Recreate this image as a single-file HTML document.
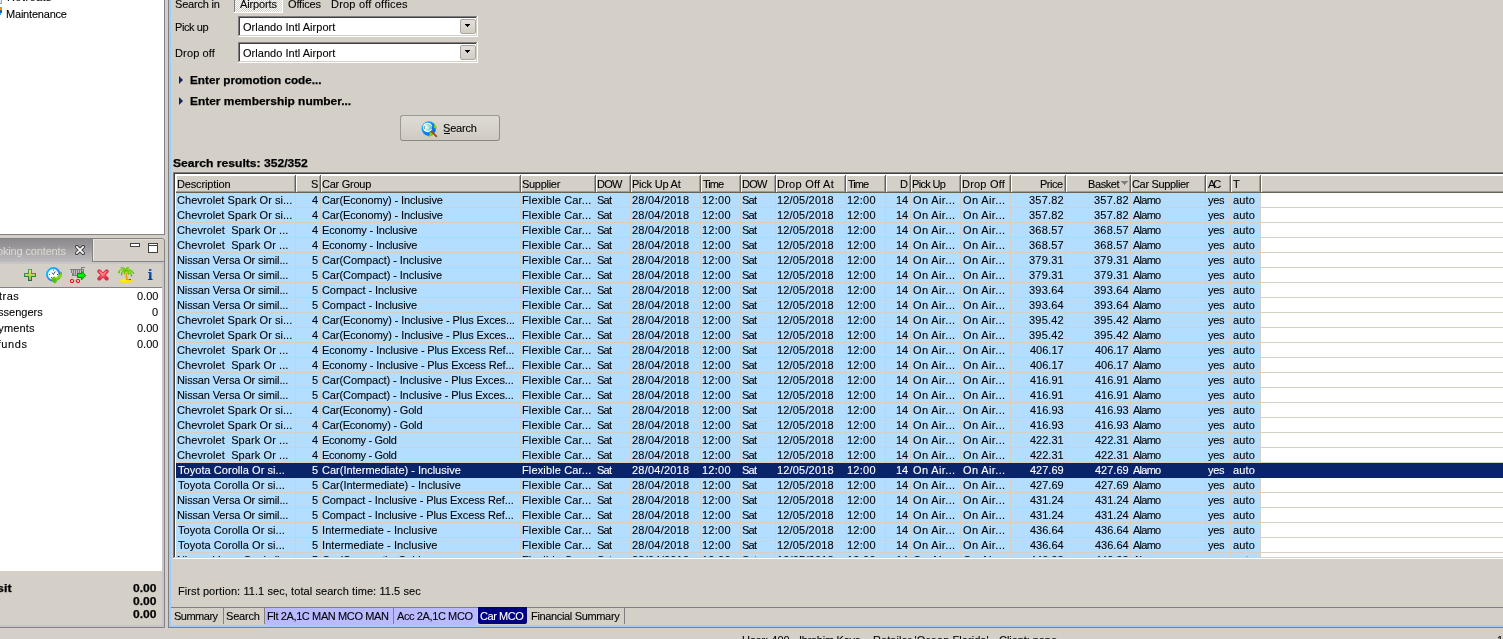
<!DOCTYPE html>
<html lang="en"><head><meta charset="utf-8"><title>Car search</title>
<style>
html,body{margin:0;padding:0;background:#d4d0c8;overflow:hidden;}
#root{position:relative;width:1503px;height:639px;overflow:hidden;background:#d4d0c8;font-family:"Liberation Sans",sans-serif;font-size:11px;color:#000;}
#root div,#root span,#root svg{position:absolute;}
.t{transform-origin:0 0;-webkit-text-stroke:0.1px currentColor;white-space:pre;line-height:13px;height:13px;font-size:11px;}
.clip{height:3px;overflow:hidden;}
#tx{left:0;top:0;width:1503px;height:639px;will-change:transform;}
.ns{-webkit-text-stroke:0 !important;}
</style></head>
<body>
<div id="root">
<div style="left:0px;top:0px;width:164px;height:234px;background:#fff;"></div>
<div style="left:164px;top:0px;width:1px;height:235px;background:#848284;"></div>
<div style="left:0px;top:234px;width:165px;height:1px;background:#848284;"></div>
<div style="left:0px;top:0px;width:1px;height:3px;background:#e4e8f6;"></div>
<div style="left:1px;top:0px;width:1px;height:4px;background:#9aa4b8;"></div>
<div style="left:0px;top:3px;width:2px;height:1px;background:#9aa4b8;"></div>
<div style="left:0px;top:7px;width:2px;height:1px;background:#38b4f0;"></div>
<div style="left:0px;top:8px;width:1px;height:2px;background:#ffa000;"></div>
<div style="left:1px;top:8px;width:1px;height:2px;background:#40a8e8;"></div>
<div style="left:0px;top:10px;width:2px;height:3px;background:#1464d0;"></div>
<div style="left:0px;top:13px;width:1px;height:2px;background:#28a8f0;"></div>
<div style="left:-5px;top:238px;width:168px;height:388px;border:1px solid #848284;border-top-right-radius:3px;box-sizing:content-box;background:#d4d0c8"></div>
<div style="left:0;top:239px;width:92px;height:23px;background:linear-gradient(#8c8a8c,#979597 30%,#b0adb0 70%,#bfbbbe)"></div>
<div style="left:92px;top:239px;width:1px;height:23px;background:#848284;"></div>
<div style="left:92px;top:261px;width:72px;height:1px;background:#848284;"></div>
<div style="left:93px;top:239px;width:1px;height:22px;background:#ece9e4;"></div>
<div style="left:94px;top:239px;width:69px;height:1px;background:#dfdbd5;"></div>
<div style="left:0px;top:262px;width:164px;height:2px;background:#c8c5c9;"></div>
<div style="left:162px;top:262px;width:2px;height:365px;background:#c8c5c9;"></div>
<div style="left:0px;top:625px;width:164px;height:2px;background:#c8c5c9;"></div>
<div style="left:0px;top:287px;width:162px;height:1px;background:#848284;"></div>
<div style="left:0px;top:288px;width:162px;height:283px;background:#fff;"></div>
<svg style="left:24px;top:269px" width="12" height="12" viewBox="0 0 12 12" ><defs><linearGradient id="pg" x1="0" y1="0" x2="0" y2="1"><stop offset="0" stop-color="#f0ee4a"/><stop offset="1" stop-color="#8fb84f"/></linearGradient><linearGradient id="pb" x1="0" y1="0" x2="0" y2="1"><stop offset="0" stop-color="#47a468"/><stop offset="1" stop-color="#1d6f3c"/></linearGradient></defs>
<path d="M4 0h4v4h4v4h-4v4h-4v-4h-4v-4h4z" fill="url(#pb)"/><path d="M5 1h2v4h4v2h-4v4h-2v-4h-4v-2h4z" fill="url(#pg)"/></svg>
<svg style="left:46px;top:267px" width="16" height="17" viewBox="0 0 16 17" ><defs><linearGradient id="cr" x1="0" y1="0" x2="1" y2="1"><stop offset="0" stop-color="#19c8ff"/><stop offset="1" stop-color="#0a5cff"/></linearGradient></defs>
<circle cx="7.3" cy="7.4" r="6.3" fill="#fff" stroke="url(#cr)" stroke-width="2"/>
<g fill="#555"><rect x="7" y="2.6" width="1" height="1"/><rect x="3" y="7" width="1" height="1"/><rect x="11" y="7" width="1" height="1"/><rect x="5" y="10" width="1" height="1"/><rect x="9.5" y="4.5" width="1" height="1" fill="#999"/></g>
<path d="M6 5.5L7.5 7.5L9 4.5" stroke="#555" stroke-width="1" fill="none"/>
<path d="M16 4.8C16.6 9.2 13.8 12.8 10.4 13.6L10.8 15.2L8.2 16.4L5 12L8.4 9L8.9 10.8C11.4 10.4 13.8 8.4 14.8 5Z" fill="#5cc000"/>
<path d="M15.6 6C15.8 9 13.6 12 10.2 12.8L9.4 10.4L6 12.4L8.8 11.6Z" fill="#92e400" opacity=".75"/></svg>
<svg style="left:70px;top:267px" width="17" height="16" viewBox="0 0 17 16" ><g fill="#7f7f7f"><rect x="11" y="0" width="4" height="1"/><rect x="11" y="0" width="1" height="3"/><rect x="0" y="2" width="14" height="1"/>
<rect x="1" y="3" width="1" height="3"/><rect x="3" y="3" width="1" height="5"/><rect x="5" y="3" width="1" height="5"/><rect x="7" y="3" width="1" height="5"/><rect x="9" y="3" width="1" height="4"/><rect x="11" y="3" width="1" height="3"/><rect x="13" y="3" width="1" height="4"/>
<rect x="2" y="6" width="1" height="2"/><rect x="2" y="8" width="6" height="1"/></g>
<g fill="#bdbdbd"><rect x="2" y="3" width="1" height="3"/><rect x="4" y="3" width="1" height="5"/><rect x="6" y="3" width="1" height="5"/><rect x="8" y="3" width="1" height="4"/><rect x="10" y="3" width="1" height="3"/><rect x="12" y="3" width="1" height="3"/></g>
<path d="M7.5 6.5h4v-2.4l4.2 4.4l-4.2 4.4v-2.4h-4z" fill="#00e800" stroke="#0a8a0a" stroke-width="1" stroke-linejoin="miter"/>
<path d="M8.5 7.5h3v2h-3z" fill="#00ff00"/>
<circle cx="2" cy="14" r="1.5" fill="#fff" stroke="#f00000" stroke-width="1.1"/><circle cx="8" cy="14" r="1.5" fill="#fff" stroke="#f00000" stroke-width="1.1"/>
<rect x="4.2" y="13.5" width="1.6" height="1" fill="#9fb4c8"/></svg>
<svg style="left:97px;top:269px" width="12" height="12" viewBox="0 0 12 12" ><defs><radialGradient id="xg" cx=".42" cy=".4" r=".75"><stop offset="0" stop-color="#ff7f86"/><stop offset=".55" stop-color="#f4485c"/><stop offset="1" stop-color="#de2a44"/></radialGradient></defs>
<path d="M2.3 2.3L9.7 9.7M9.7 2.3L2.3 9.7" stroke="#d63346" stroke-width="3.9" stroke-linecap="round"/>
<path d="M2.4 2.4L9.6 9.6M9.6 2.4L2.4 9.6" stroke="url(#xg)" stroke-width="2.5" stroke-linecap="round"/>
<path d="M2.5 2.3L5.4 5.2M9.3 2.5L7 4.8" stroke="#ff9a96" stroke-width="1.1" stroke-linecap="round" opacity=".85"/></svg>
<svg style="left:118px;top:267px" width="17" height="16" viewBox="0 0 17 16" ><ellipse cx="7.9" cy="14" rx="7" ry="1.9" fill="#ffe400"/><ellipse cx="7.4" cy="13.2" rx="4.6" ry="1" fill="#fff400"/>
<path d="M7.3 3.5C7.2 6.5 8.2 9 8.8 13" stroke="#ffc800" stroke-width="2" fill="none"/>
<path d="M7.8 6.4l1.2 .8M8 8.8l1.2 .5M8.4 10.8l1 .4M8.4 12.6l1.2 .2" stroke="#d25a14" stroke-width="1"/>
<rect x="10.6" y="12.2" width="2.4" height=".9" fill="#5a3c00"/>
<g fill="none" stroke="#5ec400" stroke-width="1.25" stroke-linecap="round">
<path d="M7.4 3.2C5 1.4 2 2.4 0.6 5.2"/><path d="M7.4 3.4C5.4 3 3.8 4.8 3.4 7.4"/><path d="M7.2 3.6C6.4 4.6 6.2 5.6 6.4 6.6"/>
<path d="M7.6 3.2C10 1.6 13.4 3 15.4 6"/><path d="M7.6 3.4C10.4 3.4 12.8 5.2 13.4 8.4"/><path d="M8 3.8C9.8 4.4 10.6 6 10.4 7.2"/>
<path d="M7.4 3C6.4 1.2 4.4 0.5 3.2 0.8"/><path d="M7.6 3C8.2 1.4 9.4 0.6 10.4 0.8"/></g>
<g fill="none" stroke="#92e200" stroke-width=".9" stroke-linecap="round"><path d="M6.4 2.4C5 1.8 3.4 2.6 2.4 3.8"/><path d="M8.8 2.6C10.6 2.2 12.4 3.4 13.6 5"/><path d="M9.2 4.4C10.4 4.8 11.4 5.8 11.8 7"/></g>
<g fill="#4eb000"><rect x="0.3" y="5" width="1.2" height="1.2"/><rect x="3" y="7" width="1.2" height="1.4"/><rect x="13" y="8" width="1.2" height="1.4"/><rect x="15" y="5.6" width="1" height="1.2"/></g></svg>
<svg style="left:148px;top:269px" width="5" height="11" viewBox="0 0 5 11" ><defs><linearGradient id="ig" x1="0" y1="0" x2="0" y2="1"><stop offset="0" stop-color="#1564b8"/><stop offset="1" stop-color="#043a8c"/></linearGradient></defs>
<path d="M1 0h2.4v2h-2.4zM0 3h3.5v7h1.1v1h-4.6v-1h1.1v-6h-1.1z" fill="url(#ig)"/></svg>
<svg style="left:75px;top:245px" width="10" height="10" viewBox="0 0 10 10" ><path d="M1.8 1.8L8.2 8.2M8.2 1.8L1.8 8.2" stroke="#3a3a3a" stroke-width="3.6" stroke-linecap="square"/><path d="M1.9 1.9L8.1 8.1M8.1 1.9L1.9 8.1" stroke="#fff" stroke-width="1.8" stroke-linecap="square"/></svg>
<div style="left:130px;top:243px;width:8px;height:2px;border:1px solid #404040;background:#fff"></div>
<div style="left:148px;top:243px;width:8px;height:8px;border:1px solid #404040;background:#fff"></div>
<div style="left:149px;top:245px;width:8px;height:1px;background:#404040;"></div>
<div style="left:168px;top:0px;width:1px;height:628px;background:#808080;"></div>
<div style="left:169px;top:0px;width:2px;height:627px;background:#a3ccfe;"></div>
<div style="left:169px;top:625px;width:1334px;height:2px;background:#a3ccfe;"></div>
<div style="left:168px;top:627px;width:1335px;height:1px;background:#808080;"></div>
<div style="left:234px;top:0px;width:1px;height:12px;background:#808080;"></div>
<div style="left:235px;top:0;width:47px;height:12px;background:repeating-conic-gradient(#fff 0 25%,#d4d0c8 0 50%) 0 0/2px 2px"></div>
<div style="left:282px;top:0px;width:1px;height:13px;background:#fff;"></div>
<div style="left:234px;top:12px;width:49px;height:1px;background:#fff;"></div>
<div style="left:238px;top:16px;width:240px;height:21px;background:#fff;"></div>
<div style="left:238px;top:16px;width:239px;height:1px;background:#808080;"></div>
<div style="left:238px;top:16px;width:1px;height:20px;background:#808080;"></div>
<div style="left:239px;top:17px;width:237px;height:1px;background:#404040;"></div>
<div style="left:239px;top:17px;width:1px;height:18px;background:#404040;"></div>
<div style="left:239px;top:35px;width:238px;height:1px;background:#d4d0c8;"></div>
<div style="left:476px;top:17px;width:1px;height:19px;background:#d4d0c8;"></div>
<div style="left:460px;top:19px;width:14px;height:13px;border:1px solid #aaa69f;border-radius:2px;background:linear-gradient(#e2dfda,#d2cec6)"></div>
<div style="left:465px;top:24px;width:5px;height:1px;background:#000;"></div>
<div style="left:466px;top:25px;width:3px;height:1px;background:#000;"></div>
<div style="left:467px;top:26px;width:1px;height:1px;background:#000;"></div>
<div style="left:238px;top:42px;width:240px;height:21px;background:#fff;"></div>
<div style="left:238px;top:42px;width:239px;height:1px;background:#808080;"></div>
<div style="left:238px;top:42px;width:1px;height:20px;background:#808080;"></div>
<div style="left:239px;top:43px;width:237px;height:1px;background:#404040;"></div>
<div style="left:239px;top:43px;width:1px;height:18px;background:#404040;"></div>
<div style="left:239px;top:61px;width:238px;height:1px;background:#d4d0c8;"></div>
<div style="left:476px;top:43px;width:1px;height:19px;background:#d4d0c8;"></div>
<div style="left:460px;top:45px;width:14px;height:13px;border:1px solid #aaa69f;border-radius:2px;background:linear-gradient(#e2dfda,#d2cec6)"></div>
<div style="left:465px;top:50px;width:5px;height:1px;background:#000;"></div>
<div style="left:466px;top:51px;width:3px;height:1px;background:#000;"></div>
<div style="left:467px;top:52px;width:1px;height:1px;background:#000;"></div>
<svg style="left:179px;top:76px" width="4" height="8" viewBox="0 0 4 8"><path d="M0 0L4 4L0 8Z" fill="#0a246a"/></svg>
<svg style="left:179px;top:97px" width="4" height="8" viewBox="0 0 4 8"><path d="M0 0L4 4L0 8Z" fill="#0a246a"/></svg>
<div style="left:400px;top:115px;width:98px;height:24px;border:1px solid #9d9993;border-bottom-color:#8b8781;border-right-color:#928e88;border-radius:3px;background:linear-gradient(#dedbd5,#d6d2ca 60%,#cecac2)"></div>
<svg style="left:421px;top:121px" width="17" height="17" viewBox="0 0 17 17" ><defs><linearGradient id="gg" x1="0" y1="0" x2="1" y2="1"><stop offset="0" stop-color="#18d0ff"/><stop offset=".5" stop-color="#0a84ff"/><stop offset="1" stop-color="#0a5cf0"/></linearGradient>
<radialGradient id="lg" cx=".35" cy=".5" r=".6"><stop offset="0" stop-color="#ffffff"/><stop offset=".5" stop-color="#b9e6c8"/><stop offset="1" stop-color="#46b4e8"/></radialGradient></defs>
<circle cx="7.8" cy="7.6" r="7.3" fill="url(#gg)"/>
<path d="M13 2.4c1.6 1 2.6 2.6 2.9 4.6l-1.2 .8l-1.8-1.4l.4-1.8z" fill="#8cd600"/><path d="M8.4 11.6l3-1l1.6 1.6l-1.6 2.2l-2.6 .6l-.6 1.4l-1-.4l1.4-2.4z" fill="#7ed000"/>
<path d="M10.4 10.4L15.4 15.4" stroke="#9a4a12" stroke-width="1.7" stroke-linecap="round"/>
<circle cx="6.6" cy="6.4" r="4.1" fill="url(#lg)" stroke="#fff" stroke-width="1.3"/>
<path d="M3.4 5.4a3.4 3.4 0 0 0 0 2.4" stroke="#58785e" stroke-width="1" fill="none"/><path d="M10.9 5.2a4.6 4.6 0 0 1 0 2.8" stroke="#1a3a70" stroke-width=".9" fill="none"/></svg>
<div style="left:444px;top:133px;width:6px;height:1px;background:#000;"></div>
<div style="left:173px;top:172px;width:1330px;height:387px;background:#fff;"></div>
<div style="left:173px;top:172px;width:1330px;height:1px;background:#808080;"></div>
<div style="left:173px;top:172px;width:1px;height:386px;background:#808080;"></div>
<div style="left:174px;top:173px;width:1329px;height:1px;background:#404040;"></div>
<div style="left:174px;top:173px;width:1px;height:384px;background:#404040;"></div>
<div style="left:174px;top:557px;width:1329px;height:1px;background:#d4d0c8;"></div>
<div style="left:177px;top:176px;width:1326px;height:15px;background:#d4d0c8;"></div>
<div style="left:176px;top:191px;width:1327px;height:1px;background:#a09c94;"></div>
<div style="left:176px;top:192px;width:1327px;height:1px;background:#666258;"></div>
<div style="left:294px;top:176px;width:1px;height:16px;background:#a09c94;"></div>
<div style="left:295px;top:175px;width:1px;height:18px;background:#666258;"></div>
<div style="left:296px;top:175px;width:1px;height:17px;background:#fff;"></div>
<div style="left:319px;top:176px;width:1px;height:16px;background:#a09c94;"></div>
<div style="left:320px;top:175px;width:1px;height:18px;background:#666258;"></div>
<div style="left:321px;top:175px;width:1px;height:17px;background:#fff;"></div>
<div style="left:519px;top:176px;width:1px;height:16px;background:#a09c94;"></div>
<div style="left:520px;top:175px;width:1px;height:18px;background:#666258;"></div>
<div style="left:521px;top:175px;width:1px;height:17px;background:#fff;"></div>
<div style="left:594px;top:176px;width:1px;height:16px;background:#a09c94;"></div>
<div style="left:595px;top:175px;width:1px;height:18px;background:#666258;"></div>
<div style="left:596px;top:175px;width:1px;height:17px;background:#fff;"></div>
<div style="left:629px;top:176px;width:1px;height:16px;background:#a09c94;"></div>
<div style="left:630px;top:175px;width:1px;height:18px;background:#666258;"></div>
<div style="left:631px;top:175px;width:1px;height:17px;background:#fff;"></div>
<div style="left:699px;top:176px;width:1px;height:16px;background:#a09c94;"></div>
<div style="left:700px;top:175px;width:1px;height:18px;background:#666258;"></div>
<div style="left:701px;top:175px;width:1px;height:17px;background:#fff;"></div>
<div style="left:739px;top:176px;width:1px;height:16px;background:#a09c94;"></div>
<div style="left:740px;top:175px;width:1px;height:18px;background:#666258;"></div>
<div style="left:741px;top:175px;width:1px;height:17px;background:#fff;"></div>
<div style="left:774px;top:176px;width:1px;height:16px;background:#a09c94;"></div>
<div style="left:775px;top:175px;width:1px;height:18px;background:#666258;"></div>
<div style="left:776px;top:175px;width:1px;height:17px;background:#fff;"></div>
<div style="left:844px;top:176px;width:1px;height:16px;background:#a09c94;"></div>
<div style="left:845px;top:175px;width:1px;height:18px;background:#666258;"></div>
<div style="left:846px;top:175px;width:1px;height:17px;background:#fff;"></div>
<div style="left:884px;top:176px;width:1px;height:16px;background:#a09c94;"></div>
<div style="left:885px;top:175px;width:1px;height:18px;background:#666258;"></div>
<div style="left:886px;top:175px;width:1px;height:17px;background:#fff;"></div>
<div style="left:909px;top:176px;width:1px;height:16px;background:#a09c94;"></div>
<div style="left:910px;top:175px;width:1px;height:18px;background:#666258;"></div>
<div style="left:911px;top:175px;width:1px;height:17px;background:#fff;"></div>
<div style="left:959px;top:176px;width:1px;height:16px;background:#a09c94;"></div>
<div style="left:960px;top:175px;width:1px;height:18px;background:#666258;"></div>
<div style="left:961px;top:175px;width:1px;height:17px;background:#fff;"></div>
<div style="left:1009px;top:176px;width:1px;height:16px;background:#a09c94;"></div>
<div style="left:1010px;top:175px;width:1px;height:18px;background:#666258;"></div>
<div style="left:1011px;top:175px;width:1px;height:17px;background:#fff;"></div>
<div style="left:1064px;top:176px;width:1px;height:16px;background:#a09c94;"></div>
<div style="left:1065px;top:175px;width:1px;height:18px;background:#666258;"></div>
<div style="left:1066px;top:175px;width:1px;height:17px;background:#fff;"></div>
<div style="left:1129px;top:176px;width:1px;height:16px;background:#a09c94;"></div>
<div style="left:1130px;top:175px;width:1px;height:18px;background:#666258;"></div>
<div style="left:1131px;top:175px;width:1px;height:17px;background:#fff;"></div>
<div style="left:1204px;top:176px;width:1px;height:16px;background:#a09c94;"></div>
<div style="left:1205px;top:175px;width:1px;height:18px;background:#666258;"></div>
<div style="left:1206px;top:175px;width:1px;height:17px;background:#fff;"></div>
<div style="left:1229px;top:176px;width:1px;height:16px;background:#a09c94;"></div>
<div style="left:1230px;top:175px;width:1px;height:18px;background:#666258;"></div>
<div style="left:1231px;top:175px;width:1px;height:17px;background:#fff;"></div>
<div style="left:1259px;top:176px;width:1px;height:16px;background:#a09c94;"></div>
<div style="left:1260px;top:175px;width:1px;height:18px;background:#666258;"></div>
<div style="left:1261px;top:175px;width:1px;height:17px;background:#fff;"></div>
<div style="left:176px;top:193px;width:1084px;height:14px;background:#b4deff;"></div>
<div style="left:176px;top:207px;width:1327px;height:1px;background:#d4d0c8;"></div>
<div style="left:176px;top:208px;width:1084px;height:14px;background:#b4deff;"></div>
<div style="left:176px;top:222px;width:1327px;height:1px;background:#d4d0c8;"></div>
<div style="left:176px;top:223px;width:1084px;height:14px;background:#b4deff;"></div>
<div style="left:176px;top:237px;width:1327px;height:1px;background:#d4d0c8;"></div>
<div style="left:176px;top:238px;width:1084px;height:14px;background:#b4deff;"></div>
<div style="left:176px;top:252px;width:1327px;height:1px;background:#d4d0c8;"></div>
<div style="left:176px;top:253px;width:1084px;height:14px;background:#b4deff;"></div>
<div style="left:176px;top:267px;width:1327px;height:1px;background:#d4d0c8;"></div>
<div style="left:176px;top:268px;width:1084px;height:14px;background:#b4deff;"></div>
<div style="left:176px;top:282px;width:1327px;height:1px;background:#d4d0c8;"></div>
<div style="left:176px;top:283px;width:1084px;height:14px;background:#b4deff;"></div>
<div style="left:176px;top:297px;width:1327px;height:1px;background:#d4d0c8;"></div>
<div style="left:176px;top:298px;width:1084px;height:14px;background:#b4deff;"></div>
<div style="left:176px;top:312px;width:1327px;height:1px;background:#d4d0c8;"></div>
<div style="left:176px;top:313px;width:1084px;height:14px;background:#b4deff;"></div>
<div style="left:176px;top:327px;width:1327px;height:1px;background:#d4d0c8;"></div>
<div style="left:176px;top:328px;width:1084px;height:14px;background:#b4deff;"></div>
<div style="left:176px;top:342px;width:1327px;height:1px;background:#d4d0c8;"></div>
<div style="left:176px;top:343px;width:1084px;height:14px;background:#b4deff;"></div>
<div style="left:176px;top:357px;width:1327px;height:1px;background:#d4d0c8;"></div>
<div style="left:176px;top:358px;width:1084px;height:14px;background:#b4deff;"></div>
<div style="left:176px;top:372px;width:1327px;height:1px;background:#d4d0c8;"></div>
<div style="left:176px;top:373px;width:1084px;height:14px;background:#b4deff;"></div>
<div style="left:176px;top:387px;width:1327px;height:1px;background:#d4d0c8;"></div>
<div style="left:176px;top:388px;width:1084px;height:14px;background:#b4deff;"></div>
<div style="left:176px;top:402px;width:1327px;height:1px;background:#d4d0c8;"></div>
<div style="left:176px;top:403px;width:1084px;height:14px;background:#b4deff;"></div>
<div style="left:176px;top:417px;width:1327px;height:1px;background:#d4d0c8;"></div>
<div style="left:176px;top:418px;width:1084px;height:14px;background:#b4deff;"></div>
<div style="left:176px;top:432px;width:1327px;height:1px;background:#d4d0c8;"></div>
<div style="left:176px;top:433px;width:1084px;height:14px;background:#b4deff;"></div>
<div style="left:176px;top:447px;width:1327px;height:1px;background:#d4d0c8;"></div>
<div style="left:176px;top:448px;width:1084px;height:14px;background:#b4deff;"></div>
<div style="left:176px;top:462px;width:1327px;height:1px;background:#d4d0c8;"></div>
<div style="left:176px;top:463px;width:1084px;height:14px;background:#b4deff;"></div>
<div style="left:176px;top:477px;width:1327px;height:1px;background:#d4d0c8;"></div>
<div style="left:176px;top:478px;width:1084px;height:14px;background:#b4deff;"></div>
<div style="left:176px;top:492px;width:1327px;height:1px;background:#d4d0c8;"></div>
<div style="left:176px;top:493px;width:1084px;height:14px;background:#b4deff;"></div>
<div style="left:176px;top:507px;width:1327px;height:1px;background:#d4d0c8;"></div>
<div style="left:176px;top:508px;width:1084px;height:14px;background:#b4deff;"></div>
<div style="left:176px;top:522px;width:1327px;height:1px;background:#d4d0c8;"></div>
<div style="left:176px;top:523px;width:1084px;height:14px;background:#b4deff;"></div>
<div style="left:176px;top:537px;width:1327px;height:1px;background:#d4d0c8;"></div>
<div style="left:176px;top:538px;width:1084px;height:14px;background:#b4deff;"></div>
<div style="left:176px;top:552px;width:1327px;height:1px;background:#d4d0c8;"></div>
<div style="left:176px;top:553px;width:1084px;height:4px;background:#b4deff;"></div>
<div style="left:295px;top:193px;width:1px;height:364px;background:#d4d0c8;"></div>
<div style="left:320px;top:193px;width:1px;height:364px;background:#d4d0c8;"></div>
<div style="left:520px;top:193px;width:1px;height:364px;background:#d4d0c8;"></div>
<div style="left:595px;top:193px;width:1px;height:364px;background:#d4d0c8;"></div>
<div style="left:630px;top:193px;width:1px;height:364px;background:#d4d0c8;"></div>
<div style="left:700px;top:193px;width:1px;height:364px;background:#d4d0c8;"></div>
<div style="left:740px;top:193px;width:1px;height:364px;background:#d4d0c8;"></div>
<div style="left:775px;top:193px;width:1px;height:364px;background:#d4d0c8;"></div>
<div style="left:845px;top:193px;width:1px;height:364px;background:#d4d0c8;"></div>
<div style="left:885px;top:193px;width:1px;height:364px;background:#d4d0c8;"></div>
<div style="left:910px;top:193px;width:1px;height:364px;background:#d4d0c8;"></div>
<div style="left:960px;top:193px;width:1px;height:364px;background:#d4d0c8;"></div>
<div style="left:1010px;top:193px;width:1px;height:364px;background:#d4d0c8;"></div>
<div style="left:1065px;top:193px;width:1px;height:364px;background:#d4d0c8;"></div>
<div style="left:1130px;top:193px;width:1px;height:364px;background:#d4d0c8;"></div>
<div style="left:1205px;top:193px;width:1px;height:364px;background:#d4d0c8;"></div>
<div style="left:1230px;top:193px;width:1px;height:364px;background:#d4d0c8;"></div>
<div style="left:1260px;top:193px;width:1px;height:364px;background:#d4d0c8;"></div>
<div style="left:176px;top:463px;width:1327px;height:15px;background:#0a246a;"></div>
<div style="left:1121px;top:181px;width:7px;height:1px;background:#808080;"></div>
<div style="left:1122px;top:182px;width:5px;height:1px;background:#808080;"></div>
<div style="left:1123px;top:183px;width:3px;height:1px;background:#808080;"></div>
<div style="left:1124px;top:184px;width:1px;height:1px;background:#808080;"></div>
<!--tablebottom-->
<div style="left:171px;top:607px;width:1332px;height:1px;background:#808080;"></div>
<div style="left:265px;top:608px;width:128px;height:17px;background:#b9baff;"></div>
<div style="left:394px;top:608px;width:83px;height:17px;background:#b9baff;"></div>
<div style="left:223px;top:608px;width:1px;height:16px;background:#808080;"></div>
<div style="left:264px;top:608px;width:1px;height:16px;background:#808080;"></div>
<div style="left:393px;top:608px;width:1px;height:16px;background:#808080;"></div>
<div style="left:624px;top:608px;width:1px;height:16px;background:#808080;"></div>
<div style="left:478px;top:607px;width:49px;height:17px;background:#000080;border-radius:0 0 2px 2px"></div>
<div id="tx">
<span class="t" style="letter-spacing:-0.2px;left:6px;top:8px;">Maintenance</span>
<span class="t" style="letter-spacing:0.43px;left:7px;top:-9px;">Retreats</span>
<span class="t ns" style="letter-spacing:-0.15px;left:-3px;top:245px;color:#dedbd4;">oking contents</span>
<span class="t" style="letter-spacing:0.5px;left:-7px;top:290px;">xtras</span>
<span class="t" style="left:-8px;top:306px;">assengers</span>
<span class="t" style="letter-spacing:0.17px;left:-8px;top:322px;">ayments</span>
<span class="t" style="letter-spacing:0.6px;left:-9px;top:338px;">efunds</span>
<span class="t" style="left:137px;top:290px;">0.00</span>
<span class="t" style="left:152px;top:306px;">0</span>
<span class="t" style="left:137px;top:322px;">0.00</span>
<span class="t" style="left:137px;top:338px;">0.00</span>
<span class="t" style="transform:scaleX(1.1282);left:-34.1282px;top:582px;font-weight:bold;-webkit-text-stroke:0.25px currentColor;">Deposit</span>
<span class="t" style="transform:scaleX(1.0952);left:133px;top:582px;font-weight:bold;-webkit-text-stroke:0.25px currentColor;">0.00</span>
<span class="t" style="transform:scaleX(1.0952);left:133px;top:595px;font-weight:bold;-webkit-text-stroke:0.25px currentColor;">0.00</span>
<span class="t" style="transform:scaleX(1.0952);left:133px;top:608px;font-weight:bold;-webkit-text-stroke:0.25px currentColor;">0.00</span>
<span class="t" style="letter-spacing:-0.19px;left:175px;top:-2px;">Search in</span>
<span class="t" style="letter-spacing:-0.14px;left:240px;top:-2px;">Airports</span>
<span class="t" style="letter-spacing:-0.17px;left:288px;top:-2px;">Offices</span>
<span class="t" style="letter-spacing:0.2px;left:331px;top:-2px;">Drop off offices</span>
<span class="t" style="letter-spacing:0.03px;left:243px;top:21px;">Orlando Intl Airport</span>
<span class="t" style="letter-spacing:0.03px;left:243px;top:47px;">Orlando Intl Airport</span>
<span class="t" style="letter-spacing:-0.42px;left:175px;top:21px;">Pick up</span>
<span class="t" style="letter-spacing:0.14px;left:175px;top:47px;">Drop off</span>
<span class="t" style="transform:scaleX(1.0656);left:189.934px;top:74px;font-weight:bold;-webkit-text-stroke:0.25px currentColor;">Enter promotion code...</span>
<span class="t" style="transform:scaleX(1.085);left:189.915px;top:95px;font-weight:bold;-webkit-text-stroke:0.25px currentColor;">Enter membership number...</span>
<span class="t" style="letter-spacing:-0.2px;left:443px;top:122px;">Search</span>
<span class="t" style="transform:scaleX(1.1025);left:173px;top:157px;font-weight:bold;-webkit-text-stroke:0.25px currentColor;">Search results: 352/352</span>
<span class="t" style="letter-spacing:-0.15px;left:177px;top:178px;">Description</span>
<span class="t" style="left:311px;top:178px;">S</span>
<span class="t" style="letter-spacing:-0.25px;left:322px;top:178px;">Car Group</span>
<span class="t" style="letter-spacing:-0.29px;left:522px;top:178px;">Supplier</span>
<span class="t" style="letter-spacing:-0.75px;left:597px;top:178px;">DOW</span>
<span class="t" style="letter-spacing:-0.22px;left:632px;top:178px;">Pick Up At</span>
<span class="t" style="letter-spacing:-1.0px;left:703px;top:178px;">Time</span>
<span class="t" style="letter-spacing:-0.75px;left:742px;top:178px;">DOW</span>
<span class="t" style="letter-spacing:0.25px;left:777px;top:178px;">Drop Off At</span>
<span class="t" style="letter-spacing:-1.0px;left:848px;top:178px;">Time</span>
<span class="t" style="left:900px;top:178px;">D</span>
<span class="t" style="letter-spacing:-0.67px;left:912px;top:178px;">Pick Up</span>
<span class="t" style="letter-spacing:0.21px;left:962px;top:178px;">Drop Off</span>
<span class="t" style="letter-spacing:-0.5px;left:1040px;top:178px;">Price</span>
<span class="t" style="letter-spacing:-0.4px;left:1088px;top:178px;">Basket</span>
<span class="t" style="letter-spacing:-0.33px;left:1132px;top:178px;">Car Supplier</span>
<span class="t" style="letter-spacing:-2.0px;left:1208px;top:178px;">AC</span>
<span class="t" style="left:1233px;top:178px;">T</span>
<span class="t" style="letter-spacing:0.04px;left:177px;top:194px;">Chevrolet Spark Or si...</span>
<span class="t" style="left:312px;top:194px;">4</span>
<span class="t" style="letter-spacing:-0.11px;left:322px;top:194px;">Car(Economy) - Inclusive</span>
<span class="t" style="letter-spacing:0.14px;left:522px;top:194px;">Flexible Car...</span>
<span class="t" style="letter-spacing:-0.75px;left:597px;top:194px;">Sat</span>
<span class="t" style="letter-spacing:0.22px;left:632px;top:194px;">28/04/2018</span>
<span class="t" style="letter-spacing:0.25px;left:702px;top:194px;">12:00</span>
<span class="t" style="letter-spacing:-0.75px;left:742px;top:194px;">Sat</span>
<span class="t" style="letter-spacing:0.17px;left:777px;top:194px;">12/05/2018</span>
<span class="t" style="letter-spacing:0.25px;left:847px;top:194px;">12:00</span>
<span class="t" style="left:896px;top:194px;">14</span>
<span class="t" style="letter-spacing:0.38px;left:913px;top:194px;">On Air...</span>
<span class="t" style="letter-spacing:0.38px;left:963px;top:194px;">On Air...</span>
<span class="t" style="letter-spacing:0.2px;left:1029px;top:194px;">357.82</span>
<span class="t" style="letter-spacing:0.2px;left:1094px;top:194px;">357.82</span>
<span class="t" style="letter-spacing:-0.75px;left:1133px;top:194px;">Alamo</span>
<span class="t" style="letter-spacing:-0.25px;left:1208px;top:194px;">yes</span>
<span class="t" style="letter-spacing:0.17px;left:1233px;top:194px;">auto</span>
<span class="t" style="letter-spacing:0.04px;left:177px;top:209px;">Chevrolet Spark Or si...</span>
<span class="t" style="left:312px;top:209px;">4</span>
<span class="t" style="letter-spacing:-0.11px;left:322px;top:209px;">Car(Economy) - Inclusive</span>
<span class="t" style="letter-spacing:0.14px;left:522px;top:209px;">Flexible Car...</span>
<span class="t" style="letter-spacing:-0.75px;left:597px;top:209px;">Sat</span>
<span class="t" style="letter-spacing:0.22px;left:632px;top:209px;">28/04/2018</span>
<span class="t" style="letter-spacing:0.25px;left:702px;top:209px;">12:00</span>
<span class="t" style="letter-spacing:-0.75px;left:742px;top:209px;">Sat</span>
<span class="t" style="letter-spacing:0.17px;left:777px;top:209px;">12/05/2018</span>
<span class="t" style="letter-spacing:0.25px;left:847px;top:209px;">12:00</span>
<span class="t" style="left:896px;top:209px;">14</span>
<span class="t" style="letter-spacing:0.38px;left:913px;top:209px;">On Air...</span>
<span class="t" style="letter-spacing:0.38px;left:963px;top:209px;">On Air...</span>
<span class="t" style="letter-spacing:0.2px;left:1029px;top:209px;">357.82</span>
<span class="t" style="letter-spacing:0.2px;left:1094px;top:209px;">357.82</span>
<span class="t" style="letter-spacing:-0.75px;left:1133px;top:209px;">Alamo</span>
<span class="t" style="letter-spacing:-0.25px;left:1208px;top:209px;">yes</span>
<span class="t" style="letter-spacing:0.17px;left:1233px;top:209px;">auto</span>
<span class="t" style="letter-spacing:0.09px;left:177px;top:224px;">Chevrolet  Spark Or ...</span>
<span class="t" style="left:312px;top:224px;">4</span>
<span class="t" style="letter-spacing:-0.17px;left:322px;top:224px;">Economy - Inclusive</span>
<span class="t" style="letter-spacing:0.14px;left:522px;top:224px;">Flexible Car...</span>
<span class="t" style="letter-spacing:-0.75px;left:597px;top:224px;">Sat</span>
<span class="t" style="letter-spacing:0.22px;left:632px;top:224px;">28/04/2018</span>
<span class="t" style="letter-spacing:0.25px;left:702px;top:224px;">12:00</span>
<span class="t" style="letter-spacing:-0.75px;left:742px;top:224px;">Sat</span>
<span class="t" style="letter-spacing:0.17px;left:777px;top:224px;">12/05/2018</span>
<span class="t" style="letter-spacing:0.25px;left:847px;top:224px;">12:00</span>
<span class="t" style="left:896px;top:224px;">14</span>
<span class="t" style="letter-spacing:0.38px;left:913px;top:224px;">On Air...</span>
<span class="t" style="letter-spacing:0.38px;left:963px;top:224px;">On Air...</span>
<span class="t" style="letter-spacing:0.2px;left:1029px;top:224px;">368.57</span>
<span class="t" style="letter-spacing:0.2px;left:1094px;top:224px;">368.57</span>
<span class="t" style="letter-spacing:-0.75px;left:1133px;top:224px;">Alamo</span>
<span class="t" style="letter-spacing:-0.25px;left:1208px;top:224px;">yes</span>
<span class="t" style="letter-spacing:0.17px;left:1233px;top:224px;">auto</span>
<span class="t" style="letter-spacing:0.09px;left:177px;top:239px;">Chevrolet  Spark Or ...</span>
<span class="t" style="left:312px;top:239px;">4</span>
<span class="t" style="letter-spacing:-0.17px;left:322px;top:239px;">Economy - Inclusive</span>
<span class="t" style="letter-spacing:0.14px;left:522px;top:239px;">Flexible Car...</span>
<span class="t" style="letter-spacing:-0.75px;left:597px;top:239px;">Sat</span>
<span class="t" style="letter-spacing:0.22px;left:632px;top:239px;">28/04/2018</span>
<span class="t" style="letter-spacing:0.25px;left:702px;top:239px;">12:00</span>
<span class="t" style="letter-spacing:-0.75px;left:742px;top:239px;">Sat</span>
<span class="t" style="letter-spacing:0.17px;left:777px;top:239px;">12/05/2018</span>
<span class="t" style="letter-spacing:0.25px;left:847px;top:239px;">12:00</span>
<span class="t" style="left:896px;top:239px;">14</span>
<span class="t" style="letter-spacing:0.38px;left:913px;top:239px;">On Air...</span>
<span class="t" style="letter-spacing:0.38px;left:963px;top:239px;">On Air...</span>
<span class="t" style="letter-spacing:0.2px;left:1029px;top:239px;">368.57</span>
<span class="t" style="letter-spacing:0.2px;left:1094px;top:239px;">368.57</span>
<span class="t" style="letter-spacing:-0.75px;left:1133px;top:239px;">Alamo</span>
<span class="t" style="letter-spacing:-0.25px;left:1208px;top:239px;">yes</span>
<span class="t" style="letter-spacing:0.17px;left:1233px;top:239px;">auto</span>
<span class="t" style="letter-spacing:-0.13px;left:177px;top:254px;">Nissan Versa Or simil...</span>
<span class="t" style="left:312px;top:254px;">5</span>
<span class="t" style="letter-spacing:-0.07px;left:322px;top:254px;">Car(Compact) - Inclusive</span>
<span class="t" style="letter-spacing:0.14px;left:522px;top:254px;">Flexible Car...</span>
<span class="t" style="letter-spacing:-0.75px;left:597px;top:254px;">Sat</span>
<span class="t" style="letter-spacing:0.22px;left:632px;top:254px;">28/04/2018</span>
<span class="t" style="letter-spacing:0.25px;left:702px;top:254px;">12:00</span>
<span class="t" style="letter-spacing:-0.75px;left:742px;top:254px;">Sat</span>
<span class="t" style="letter-spacing:0.17px;left:777px;top:254px;">12/05/2018</span>
<span class="t" style="letter-spacing:0.25px;left:847px;top:254px;">12:00</span>
<span class="t" style="left:896px;top:254px;">14</span>
<span class="t" style="letter-spacing:0.38px;left:913px;top:254px;">On Air...</span>
<span class="t" style="letter-spacing:0.38px;left:963px;top:254px;">On Air...</span>
<span class="t" style="letter-spacing:0.2px;left:1029px;top:254px;">379.31</span>
<span class="t" style="letter-spacing:0.2px;left:1094px;top:254px;">379.31</span>
<span class="t" style="letter-spacing:-0.75px;left:1133px;top:254px;">Alamo</span>
<span class="t" style="letter-spacing:-0.25px;left:1208px;top:254px;">yes</span>
<span class="t" style="letter-spacing:0.17px;left:1233px;top:254px;">auto</span>
<span class="t" style="letter-spacing:-0.13px;left:177px;top:269px;">Nissan Versa Or simil...</span>
<span class="t" style="left:312px;top:269px;">5</span>
<span class="t" style="letter-spacing:-0.07px;left:322px;top:269px;">Car(Compact) - Inclusive</span>
<span class="t" style="letter-spacing:0.14px;left:522px;top:269px;">Flexible Car...</span>
<span class="t" style="letter-spacing:-0.75px;left:597px;top:269px;">Sat</span>
<span class="t" style="letter-spacing:0.22px;left:632px;top:269px;">28/04/2018</span>
<span class="t" style="letter-spacing:0.25px;left:702px;top:269px;">12:00</span>
<span class="t" style="letter-spacing:-0.75px;left:742px;top:269px;">Sat</span>
<span class="t" style="letter-spacing:0.17px;left:777px;top:269px;">12/05/2018</span>
<span class="t" style="letter-spacing:0.25px;left:847px;top:269px;">12:00</span>
<span class="t" style="left:896px;top:269px;">14</span>
<span class="t" style="letter-spacing:0.38px;left:913px;top:269px;">On Air...</span>
<span class="t" style="letter-spacing:0.38px;left:963px;top:269px;">On Air...</span>
<span class="t" style="letter-spacing:0.2px;left:1029px;top:269px;">379.31</span>
<span class="t" style="letter-spacing:0.2px;left:1094px;top:269px;">379.31</span>
<span class="t" style="letter-spacing:-0.75px;left:1133px;top:269px;">Alamo</span>
<span class="t" style="letter-spacing:-0.25px;left:1208px;top:269px;">yes</span>
<span class="t" style="letter-spacing:0.17px;left:1233px;top:269px;">auto</span>
<span class="t" style="letter-spacing:-0.13px;left:177px;top:284px;">Nissan Versa Or simil...</span>
<span class="t" style="left:312px;top:284px;">5</span>
<span class="t" style="letter-spacing:-0.08px;left:322px;top:284px;">Compact - Inclusive</span>
<span class="t" style="letter-spacing:0.14px;left:522px;top:284px;">Flexible Car...</span>
<span class="t" style="letter-spacing:-0.75px;left:597px;top:284px;">Sat</span>
<span class="t" style="letter-spacing:0.22px;left:632px;top:284px;">28/04/2018</span>
<span class="t" style="letter-spacing:0.25px;left:702px;top:284px;">12:00</span>
<span class="t" style="letter-spacing:-0.75px;left:742px;top:284px;">Sat</span>
<span class="t" style="letter-spacing:0.17px;left:777px;top:284px;">12/05/2018</span>
<span class="t" style="letter-spacing:0.25px;left:847px;top:284px;">12:00</span>
<span class="t" style="left:896px;top:284px;">14</span>
<span class="t" style="letter-spacing:0.38px;left:913px;top:284px;">On Air...</span>
<span class="t" style="letter-spacing:0.38px;left:963px;top:284px;">On Air...</span>
<span class="t" style="letter-spacing:0.2px;left:1029px;top:284px;">393.64</span>
<span class="t" style="letter-spacing:0.2px;left:1094px;top:284px;">393.64</span>
<span class="t" style="letter-spacing:-0.75px;left:1133px;top:284px;">Alamo</span>
<span class="t" style="letter-spacing:-0.25px;left:1208px;top:284px;">yes</span>
<span class="t" style="letter-spacing:0.17px;left:1233px;top:284px;">auto</span>
<span class="t" style="letter-spacing:-0.13px;left:177px;top:299px;">Nissan Versa Or simil...</span>
<span class="t" style="left:312px;top:299px;">5</span>
<span class="t" style="letter-spacing:-0.08px;left:322px;top:299px;">Compact - Inclusive</span>
<span class="t" style="letter-spacing:0.14px;left:522px;top:299px;">Flexible Car...</span>
<span class="t" style="letter-spacing:-0.75px;left:597px;top:299px;">Sat</span>
<span class="t" style="letter-spacing:0.22px;left:632px;top:299px;">28/04/2018</span>
<span class="t" style="letter-spacing:0.25px;left:702px;top:299px;">12:00</span>
<span class="t" style="letter-spacing:-0.75px;left:742px;top:299px;">Sat</span>
<span class="t" style="letter-spacing:0.17px;left:777px;top:299px;">12/05/2018</span>
<span class="t" style="letter-spacing:0.25px;left:847px;top:299px;">12:00</span>
<span class="t" style="left:896px;top:299px;">14</span>
<span class="t" style="letter-spacing:0.38px;left:913px;top:299px;">On Air...</span>
<span class="t" style="letter-spacing:0.38px;left:963px;top:299px;">On Air...</span>
<span class="t" style="letter-spacing:0.2px;left:1029px;top:299px;">393.64</span>
<span class="t" style="letter-spacing:0.2px;left:1094px;top:299px;">393.64</span>
<span class="t" style="letter-spacing:-0.75px;left:1133px;top:299px;">Alamo</span>
<span class="t" style="letter-spacing:-0.25px;left:1208px;top:299px;">yes</span>
<span class="t" style="letter-spacing:0.17px;left:1233px;top:299px;">auto</span>
<span class="t" style="letter-spacing:0.04px;left:177px;top:314px;">Chevrolet Spark Or si...</span>
<span class="t" style="left:312px;top:314px;">4</span>
<span class="t" style="letter-spacing:-0.1px;left:322px;top:314px;">Car(Economy) - Inclusive - Plus Exces...</span>
<span class="t" style="letter-spacing:0.14px;left:522px;top:314px;">Flexible Car...</span>
<span class="t" style="letter-spacing:-0.75px;left:597px;top:314px;">Sat</span>
<span class="t" style="letter-spacing:0.22px;left:632px;top:314px;">28/04/2018</span>
<span class="t" style="letter-spacing:0.25px;left:702px;top:314px;">12:00</span>
<span class="t" style="letter-spacing:-0.75px;left:742px;top:314px;">Sat</span>
<span class="t" style="letter-spacing:0.17px;left:777px;top:314px;">12/05/2018</span>
<span class="t" style="letter-spacing:0.25px;left:847px;top:314px;">12:00</span>
<span class="t" style="left:896px;top:314px;">14</span>
<span class="t" style="letter-spacing:0.38px;left:913px;top:314px;">On Air...</span>
<span class="t" style="letter-spacing:0.38px;left:963px;top:314px;">On Air...</span>
<span class="t" style="letter-spacing:0.2px;left:1029px;top:314px;">395.42</span>
<span class="t" style="letter-spacing:0.2px;left:1094px;top:314px;">395.42</span>
<span class="t" style="letter-spacing:-0.75px;left:1133px;top:314px;">Alamo</span>
<span class="t" style="letter-spacing:-0.25px;left:1208px;top:314px;">yes</span>
<span class="t" style="letter-spacing:0.17px;left:1233px;top:314px;">auto</span>
<span class="t" style="letter-spacing:0.04px;left:177px;top:329px;">Chevrolet Spark Or si...</span>
<span class="t" style="left:312px;top:329px;">4</span>
<span class="t" style="letter-spacing:-0.1px;left:322px;top:329px;">Car(Economy) - Inclusive - Plus Exces...</span>
<span class="t" style="letter-spacing:0.14px;left:522px;top:329px;">Flexible Car...</span>
<span class="t" style="letter-spacing:-0.75px;left:597px;top:329px;">Sat</span>
<span class="t" style="letter-spacing:0.22px;left:632px;top:329px;">28/04/2018</span>
<span class="t" style="letter-spacing:0.25px;left:702px;top:329px;">12:00</span>
<span class="t" style="letter-spacing:-0.75px;left:742px;top:329px;">Sat</span>
<span class="t" style="letter-spacing:0.17px;left:777px;top:329px;">12/05/2018</span>
<span class="t" style="letter-spacing:0.25px;left:847px;top:329px;">12:00</span>
<span class="t" style="left:896px;top:329px;">14</span>
<span class="t" style="letter-spacing:0.38px;left:913px;top:329px;">On Air...</span>
<span class="t" style="letter-spacing:0.38px;left:963px;top:329px;">On Air...</span>
<span class="t" style="letter-spacing:0.2px;left:1029px;top:329px;">395.42</span>
<span class="t" style="letter-spacing:0.2px;left:1094px;top:329px;">395.42</span>
<span class="t" style="letter-spacing:-0.75px;left:1133px;top:329px;">Alamo</span>
<span class="t" style="letter-spacing:-0.25px;left:1208px;top:329px;">yes</span>
<span class="t" style="letter-spacing:0.17px;left:1233px;top:329px;">auto</span>
<span class="t" style="letter-spacing:0.09px;left:177px;top:344px;">Chevrolet  Spark Or ...</span>
<span class="t" style="left:312px;top:344px;">4</span>
<span class="t" style="letter-spacing:-0.13px;left:322px;top:344px;">Economy - Inclusive - Plus Excess Ref...</span>
<span class="t" style="letter-spacing:0.14px;left:522px;top:344px;">Flexible Car...</span>
<span class="t" style="letter-spacing:-0.75px;left:597px;top:344px;">Sat</span>
<span class="t" style="letter-spacing:0.22px;left:632px;top:344px;">28/04/2018</span>
<span class="t" style="letter-spacing:0.25px;left:702px;top:344px;">12:00</span>
<span class="t" style="letter-spacing:-0.75px;left:742px;top:344px;">Sat</span>
<span class="t" style="letter-spacing:0.17px;left:777px;top:344px;">12/05/2018</span>
<span class="t" style="letter-spacing:0.25px;left:847px;top:344px;">12:00</span>
<span class="t" style="left:896px;top:344px;">14</span>
<span class="t" style="letter-spacing:0.38px;left:913px;top:344px;">On Air...</span>
<span class="t" style="letter-spacing:0.38px;left:963px;top:344px;">On Air...</span>
<span class="t" style="left:1030px;top:344px;">406.17</span>
<span class="t" style="left:1095px;top:344px;">406.17</span>
<span class="t" style="letter-spacing:-0.75px;left:1133px;top:344px;">Alamo</span>
<span class="t" style="letter-spacing:-0.25px;left:1208px;top:344px;">yes</span>
<span class="t" style="letter-spacing:0.17px;left:1233px;top:344px;">auto</span>
<span class="t" style="letter-spacing:0.09px;left:177px;top:359px;">Chevrolet  Spark Or ...</span>
<span class="t" style="left:312px;top:359px;">4</span>
<span class="t" style="letter-spacing:-0.13px;left:322px;top:359px;">Economy - Inclusive - Plus Excess Ref...</span>
<span class="t" style="letter-spacing:0.14px;left:522px;top:359px;">Flexible Car...</span>
<span class="t" style="letter-spacing:-0.75px;left:597px;top:359px;">Sat</span>
<span class="t" style="letter-spacing:0.22px;left:632px;top:359px;">28/04/2018</span>
<span class="t" style="letter-spacing:0.25px;left:702px;top:359px;">12:00</span>
<span class="t" style="letter-spacing:-0.75px;left:742px;top:359px;">Sat</span>
<span class="t" style="letter-spacing:0.17px;left:777px;top:359px;">12/05/2018</span>
<span class="t" style="letter-spacing:0.25px;left:847px;top:359px;">12:00</span>
<span class="t" style="left:896px;top:359px;">14</span>
<span class="t" style="letter-spacing:0.38px;left:913px;top:359px;">On Air...</span>
<span class="t" style="letter-spacing:0.38px;left:963px;top:359px;">On Air...</span>
<span class="t" style="left:1030px;top:359px;">406.17</span>
<span class="t" style="left:1095px;top:359px;">406.17</span>
<span class="t" style="letter-spacing:-0.75px;left:1133px;top:359px;">Alamo</span>
<span class="t" style="letter-spacing:-0.25px;left:1208px;top:359px;">yes</span>
<span class="t" style="letter-spacing:0.17px;left:1233px;top:359px;">auto</span>
<span class="t" style="letter-spacing:-0.13px;left:177px;top:374px;">Nissan Versa Or simil...</span>
<span class="t" style="left:312px;top:374px;">5</span>
<span class="t" style="letter-spacing:-0.08px;left:322px;top:374px;">Car(Compact) - Inclusive - Plus Exces...</span>
<span class="t" style="letter-spacing:0.14px;left:522px;top:374px;">Flexible Car...</span>
<span class="t" style="letter-spacing:-0.75px;left:597px;top:374px;">Sat</span>
<span class="t" style="letter-spacing:0.22px;left:632px;top:374px;">28/04/2018</span>
<span class="t" style="letter-spacing:0.25px;left:702px;top:374px;">12:00</span>
<span class="t" style="letter-spacing:-0.75px;left:742px;top:374px;">Sat</span>
<span class="t" style="letter-spacing:0.17px;left:777px;top:374px;">12/05/2018</span>
<span class="t" style="letter-spacing:0.25px;left:847px;top:374px;">12:00</span>
<span class="t" style="left:896px;top:374px;">14</span>
<span class="t" style="letter-spacing:0.38px;left:913px;top:374px;">On Air...</span>
<span class="t" style="letter-spacing:0.38px;left:963px;top:374px;">On Air...</span>
<span class="t" style="left:1030px;top:374px;">416.91</span>
<span class="t" style="left:1095px;top:374px;">416.91</span>
<span class="t" style="letter-spacing:-0.75px;left:1133px;top:374px;">Alamo</span>
<span class="t" style="letter-spacing:-0.25px;left:1208px;top:374px;">yes</span>
<span class="t" style="letter-spacing:0.17px;left:1233px;top:374px;">auto</span>
<span class="t" style="letter-spacing:-0.13px;left:177px;top:389px;">Nissan Versa Or simil...</span>
<span class="t" style="left:312px;top:389px;">5</span>
<span class="t" style="letter-spacing:-0.08px;left:322px;top:389px;">Car(Compact) - Inclusive - Plus Exces...</span>
<span class="t" style="letter-spacing:0.14px;left:522px;top:389px;">Flexible Car...</span>
<span class="t" style="letter-spacing:-0.75px;left:597px;top:389px;">Sat</span>
<span class="t" style="letter-spacing:0.22px;left:632px;top:389px;">28/04/2018</span>
<span class="t" style="letter-spacing:0.25px;left:702px;top:389px;">12:00</span>
<span class="t" style="letter-spacing:-0.75px;left:742px;top:389px;">Sat</span>
<span class="t" style="letter-spacing:0.17px;left:777px;top:389px;">12/05/2018</span>
<span class="t" style="letter-spacing:0.25px;left:847px;top:389px;">12:00</span>
<span class="t" style="left:896px;top:389px;">14</span>
<span class="t" style="letter-spacing:0.38px;left:913px;top:389px;">On Air...</span>
<span class="t" style="letter-spacing:0.38px;left:963px;top:389px;">On Air...</span>
<span class="t" style="left:1030px;top:389px;">416.91</span>
<span class="t" style="left:1095px;top:389px;">416.91</span>
<span class="t" style="letter-spacing:-0.75px;left:1133px;top:389px;">Alamo</span>
<span class="t" style="letter-spacing:-0.25px;left:1208px;top:389px;">yes</span>
<span class="t" style="letter-spacing:0.17px;left:1233px;top:389px;">auto</span>
<span class="t" style="letter-spacing:0.04px;left:177px;top:404px;">Chevrolet Spark Or si...</span>
<span class="t" style="left:312px;top:404px;">4</span>
<span class="t" style="letter-spacing:-0.19px;left:322px;top:404px;">Car(Economy) - Gold</span>
<span class="t" style="letter-spacing:0.14px;left:522px;top:404px;">Flexible Car...</span>
<span class="t" style="letter-spacing:-0.75px;left:597px;top:404px;">Sat</span>
<span class="t" style="letter-spacing:0.22px;left:632px;top:404px;">28/04/2018</span>
<span class="t" style="letter-spacing:0.25px;left:702px;top:404px;">12:00</span>
<span class="t" style="letter-spacing:-0.75px;left:742px;top:404px;">Sat</span>
<span class="t" style="letter-spacing:0.17px;left:777px;top:404px;">12/05/2018</span>
<span class="t" style="letter-spacing:0.25px;left:847px;top:404px;">12:00</span>
<span class="t" style="left:896px;top:404px;">14</span>
<span class="t" style="letter-spacing:0.38px;left:913px;top:404px;">On Air...</span>
<span class="t" style="letter-spacing:0.38px;left:963px;top:404px;">On Air...</span>
<span class="t" style="left:1030px;top:404px;">416.93</span>
<span class="t" style="left:1095px;top:404px;">416.93</span>
<span class="t" style="letter-spacing:-0.75px;left:1133px;top:404px;">Alamo</span>
<span class="t" style="letter-spacing:-0.25px;left:1208px;top:404px;">yes</span>
<span class="t" style="letter-spacing:0.17px;left:1233px;top:404px;">auto</span>
<span class="t" style="letter-spacing:0.04px;left:177px;top:419px;">Chevrolet Spark Or si...</span>
<span class="t" style="left:312px;top:419px;">4</span>
<span class="t" style="letter-spacing:-0.19px;left:322px;top:419px;">Car(Economy) - Gold</span>
<span class="t" style="letter-spacing:0.14px;left:522px;top:419px;">Flexible Car...</span>
<span class="t" style="letter-spacing:-0.75px;left:597px;top:419px;">Sat</span>
<span class="t" style="letter-spacing:0.22px;left:632px;top:419px;">28/04/2018</span>
<span class="t" style="letter-spacing:0.25px;left:702px;top:419px;">12:00</span>
<span class="t" style="letter-spacing:-0.75px;left:742px;top:419px;">Sat</span>
<span class="t" style="letter-spacing:0.17px;left:777px;top:419px;">12/05/2018</span>
<span class="t" style="letter-spacing:0.25px;left:847px;top:419px;">12:00</span>
<span class="t" style="left:896px;top:419px;">14</span>
<span class="t" style="letter-spacing:0.38px;left:913px;top:419px;">On Air...</span>
<span class="t" style="letter-spacing:0.38px;left:963px;top:419px;">On Air...</span>
<span class="t" style="left:1030px;top:419px;">416.93</span>
<span class="t" style="left:1095px;top:419px;">416.93</span>
<span class="t" style="letter-spacing:-0.75px;left:1133px;top:419px;">Alamo</span>
<span class="t" style="letter-spacing:-0.25px;left:1208px;top:419px;">yes</span>
<span class="t" style="letter-spacing:0.17px;left:1233px;top:419px;">auto</span>
<span class="t" style="letter-spacing:0.09px;left:177px;top:434px;">Chevrolet  Spark Or ...</span>
<span class="t" style="left:312px;top:434px;">4</span>
<span class="t" style="letter-spacing:-0.31px;left:322px;top:434px;">Economy - Gold</span>
<span class="t" style="letter-spacing:0.14px;left:522px;top:434px;">Flexible Car...</span>
<span class="t" style="letter-spacing:-0.75px;left:597px;top:434px;">Sat</span>
<span class="t" style="letter-spacing:0.22px;left:632px;top:434px;">28/04/2018</span>
<span class="t" style="letter-spacing:0.25px;left:702px;top:434px;">12:00</span>
<span class="t" style="letter-spacing:-0.75px;left:742px;top:434px;">Sat</span>
<span class="t" style="letter-spacing:0.17px;left:777px;top:434px;">12/05/2018</span>
<span class="t" style="letter-spacing:0.25px;left:847px;top:434px;">12:00</span>
<span class="t" style="left:896px;top:434px;">14</span>
<span class="t" style="letter-spacing:0.38px;left:913px;top:434px;">On Air...</span>
<span class="t" style="letter-spacing:0.38px;left:963px;top:434px;">On Air...</span>
<span class="t" style="left:1030px;top:434px;">422.31</span>
<span class="t" style="left:1095px;top:434px;">422.31</span>
<span class="t" style="letter-spacing:-0.75px;left:1133px;top:434px;">Alamo</span>
<span class="t" style="letter-spacing:-0.25px;left:1208px;top:434px;">yes</span>
<span class="t" style="letter-spacing:0.17px;left:1233px;top:434px;">auto</span>
<span class="t" style="letter-spacing:0.09px;left:177px;top:449px;">Chevrolet  Spark Or ...</span>
<span class="t" style="left:312px;top:449px;">4</span>
<span class="t" style="letter-spacing:-0.31px;left:322px;top:449px;">Economy - Gold</span>
<span class="t" style="letter-spacing:0.14px;left:522px;top:449px;">Flexible Car...</span>
<span class="t" style="letter-spacing:-0.75px;left:597px;top:449px;">Sat</span>
<span class="t" style="letter-spacing:0.22px;left:632px;top:449px;">28/04/2018</span>
<span class="t" style="letter-spacing:0.25px;left:702px;top:449px;">12:00</span>
<span class="t" style="letter-spacing:-0.75px;left:742px;top:449px;">Sat</span>
<span class="t" style="letter-spacing:0.17px;left:777px;top:449px;">12/05/2018</span>
<span class="t" style="letter-spacing:0.25px;left:847px;top:449px;">12:00</span>
<span class="t" style="left:896px;top:449px;">14</span>
<span class="t" style="letter-spacing:0.38px;left:913px;top:449px;">On Air...</span>
<span class="t" style="letter-spacing:0.38px;left:963px;top:449px;">On Air...</span>
<span class="t" style="left:1030px;top:449px;">422.31</span>
<span class="t" style="left:1095px;top:449px;">422.31</span>
<span class="t" style="letter-spacing:-0.75px;left:1133px;top:449px;">Alamo</span>
<span class="t" style="letter-spacing:-0.25px;left:1208px;top:449px;">yes</span>
<span class="t" style="letter-spacing:0.17px;left:1233px;top:449px;">auto</span>
<span class="t" style="letter-spacing:0.05px;left:178px;top:464px;color:#fff;">Toyota Corolla Or si...</span>
<span class="t" style="left:312px;top:464px;color:#fff;">5</span>
<span class="t" style="left:322px;top:464px;color:#fff;">Car(Intermediate) - Inclusive</span>
<span class="t" style="letter-spacing:0.14px;left:522px;top:464px;color:#fff;">Flexible Car...</span>
<span class="t" style="letter-spacing:-0.75px;left:597px;top:464px;color:#fff;">Sat</span>
<span class="t" style="letter-spacing:0.22px;left:632px;top:464px;color:#fff;">28/04/2018</span>
<span class="t" style="letter-spacing:0.25px;left:702px;top:464px;color:#fff;">12:00</span>
<span class="t" style="letter-spacing:-0.75px;left:742px;top:464px;color:#fff;">Sat</span>
<span class="t" style="letter-spacing:0.17px;left:777px;top:464px;color:#fff;">12/05/2018</span>
<span class="t" style="letter-spacing:0.25px;left:847px;top:464px;color:#fff;">12:00</span>
<span class="t" style="left:896px;top:464px;color:#fff;">14</span>
<span class="t" style="letter-spacing:0.38px;left:913px;top:464px;color:#fff;">On Air...</span>
<span class="t" style="letter-spacing:0.38px;left:963px;top:464px;color:#fff;">On Air...</span>
<span class="t" style="left:1030px;top:464px;color:#fff;">427.69</span>
<span class="t" style="left:1095px;top:464px;color:#fff;">427.69</span>
<span class="t" style="letter-spacing:-0.75px;left:1133px;top:464px;color:#fff;">Alamo</span>
<span class="t" style="letter-spacing:-0.25px;left:1208px;top:464px;color:#fff;">yes</span>
<span class="t" style="letter-spacing:0.17px;left:1233px;top:464px;color:#fff;">auto</span>
<span class="t" style="letter-spacing:0.05px;left:178px;top:479px;">Toyota Corolla Or si...</span>
<span class="t" style="left:312px;top:479px;">5</span>
<span class="t" style="left:322px;top:479px;">Car(Intermediate) - Inclusive</span>
<span class="t" style="letter-spacing:0.14px;left:522px;top:479px;">Flexible Car...</span>
<span class="t" style="letter-spacing:-0.75px;left:597px;top:479px;">Sat</span>
<span class="t" style="letter-spacing:0.22px;left:632px;top:479px;">28/04/2018</span>
<span class="t" style="letter-spacing:0.25px;left:702px;top:479px;">12:00</span>
<span class="t" style="letter-spacing:-0.75px;left:742px;top:479px;">Sat</span>
<span class="t" style="letter-spacing:0.17px;left:777px;top:479px;">12/05/2018</span>
<span class="t" style="letter-spacing:0.25px;left:847px;top:479px;">12:00</span>
<span class="t" style="left:896px;top:479px;">14</span>
<span class="t" style="letter-spacing:0.38px;left:913px;top:479px;">On Air...</span>
<span class="t" style="letter-spacing:0.38px;left:963px;top:479px;">On Air...</span>
<span class="t" style="left:1030px;top:479px;">427.69</span>
<span class="t" style="left:1095px;top:479px;">427.69</span>
<span class="t" style="letter-spacing:-0.75px;left:1133px;top:479px;">Alamo</span>
<span class="t" style="letter-spacing:-0.25px;left:1208px;top:479px;">yes</span>
<span class="t" style="letter-spacing:0.17px;left:1233px;top:479px;">auto</span>
<span class="t" style="letter-spacing:-0.13px;left:177px;top:494px;">Nissan Versa Or simil...</span>
<span class="t" style="left:312px;top:494px;">5</span>
<span class="t" style="letter-spacing:-0.1px;left:322px;top:494px;">Compact - Inclusive - Plus Excess Ref...</span>
<span class="t" style="letter-spacing:0.14px;left:522px;top:494px;">Flexible Car...</span>
<span class="t" style="letter-spacing:-0.75px;left:597px;top:494px;">Sat</span>
<span class="t" style="letter-spacing:0.22px;left:632px;top:494px;">28/04/2018</span>
<span class="t" style="letter-spacing:0.25px;left:702px;top:494px;">12:00</span>
<span class="t" style="letter-spacing:-0.75px;left:742px;top:494px;">Sat</span>
<span class="t" style="letter-spacing:0.17px;left:777px;top:494px;">12/05/2018</span>
<span class="t" style="letter-spacing:0.25px;left:847px;top:494px;">12:00</span>
<span class="t" style="left:896px;top:494px;">14</span>
<span class="t" style="letter-spacing:0.38px;left:913px;top:494px;">On Air...</span>
<span class="t" style="letter-spacing:0.38px;left:963px;top:494px;">On Air...</span>
<span class="t" style="left:1030px;top:494px;">431.24</span>
<span class="t" style="left:1095px;top:494px;">431.24</span>
<span class="t" style="letter-spacing:-0.75px;left:1133px;top:494px;">Alamo</span>
<span class="t" style="letter-spacing:-0.25px;left:1208px;top:494px;">yes</span>
<span class="t" style="letter-spacing:0.17px;left:1233px;top:494px;">auto</span>
<span class="t" style="letter-spacing:-0.13px;left:177px;top:509px;">Nissan Versa Or simil...</span>
<span class="t" style="left:312px;top:509px;">5</span>
<span class="t" style="letter-spacing:-0.1px;left:322px;top:509px;">Compact - Inclusive - Plus Excess Ref...</span>
<span class="t" style="letter-spacing:0.14px;left:522px;top:509px;">Flexible Car...</span>
<span class="t" style="letter-spacing:-0.75px;left:597px;top:509px;">Sat</span>
<span class="t" style="letter-spacing:0.22px;left:632px;top:509px;">28/04/2018</span>
<span class="t" style="letter-spacing:0.25px;left:702px;top:509px;">12:00</span>
<span class="t" style="letter-spacing:-0.75px;left:742px;top:509px;">Sat</span>
<span class="t" style="letter-spacing:0.17px;left:777px;top:509px;">12/05/2018</span>
<span class="t" style="letter-spacing:0.25px;left:847px;top:509px;">12:00</span>
<span class="t" style="left:896px;top:509px;">14</span>
<span class="t" style="letter-spacing:0.38px;left:913px;top:509px;">On Air...</span>
<span class="t" style="letter-spacing:0.38px;left:963px;top:509px;">On Air...</span>
<span class="t" style="left:1030px;top:509px;">431.24</span>
<span class="t" style="left:1095px;top:509px;">431.24</span>
<span class="t" style="letter-spacing:-0.75px;left:1133px;top:509px;">Alamo</span>
<span class="t" style="letter-spacing:-0.25px;left:1208px;top:509px;">yes</span>
<span class="t" style="letter-spacing:0.17px;left:1233px;top:509px;">auto</span>
<span class="t" style="letter-spacing:0.05px;left:178px;top:524px;">Toyota Corolla Or si...</span>
<span class="t" style="left:312px;top:524px;">5</span>
<span class="t" style="letter-spacing:0.07px;left:322px;top:524px;">Intermediate - Inclusive</span>
<span class="t" style="letter-spacing:0.14px;left:522px;top:524px;">Flexible Car...</span>
<span class="t" style="letter-spacing:-0.75px;left:597px;top:524px;">Sat</span>
<span class="t" style="letter-spacing:0.22px;left:632px;top:524px;">28/04/2018</span>
<span class="t" style="letter-spacing:0.25px;left:702px;top:524px;">12:00</span>
<span class="t" style="letter-spacing:-0.75px;left:742px;top:524px;">Sat</span>
<span class="t" style="letter-spacing:0.17px;left:777px;top:524px;">12/05/2018</span>
<span class="t" style="letter-spacing:0.25px;left:847px;top:524px;">12:00</span>
<span class="t" style="left:896px;top:524px;">14</span>
<span class="t" style="letter-spacing:0.38px;left:913px;top:524px;">On Air...</span>
<span class="t" style="letter-spacing:0.38px;left:963px;top:524px;">On Air...</span>
<span class="t" style="left:1030px;top:524px;">436.64</span>
<span class="t" style="left:1095px;top:524px;">436.64</span>
<span class="t" style="letter-spacing:-0.75px;left:1133px;top:524px;">Alamo</span>
<span class="t" style="letter-spacing:-0.25px;left:1208px;top:524px;">yes</span>
<span class="t" style="letter-spacing:0.17px;left:1233px;top:524px;">auto</span>
<span class="t" style="letter-spacing:0.05px;left:178px;top:539px;">Toyota Corolla Or si...</span>
<span class="t" style="left:312px;top:539px;">5</span>
<span class="t" style="letter-spacing:0.07px;left:322px;top:539px;">Intermediate - Inclusive</span>
<span class="t" style="letter-spacing:0.14px;left:522px;top:539px;">Flexible Car...</span>
<span class="t" style="letter-spacing:-0.75px;left:597px;top:539px;">Sat</span>
<span class="t" style="letter-spacing:0.22px;left:632px;top:539px;">28/04/2018</span>
<span class="t" style="letter-spacing:0.25px;left:702px;top:539px;">12:00</span>
<span class="t" style="letter-spacing:-0.75px;left:742px;top:539px;">Sat</span>
<span class="t" style="letter-spacing:0.17px;left:777px;top:539px;">12/05/2018</span>
<span class="t" style="letter-spacing:0.25px;left:847px;top:539px;">12:00</span>
<span class="t" style="left:896px;top:539px;">14</span>
<span class="t" style="letter-spacing:0.38px;left:913px;top:539px;">On Air...</span>
<span class="t" style="letter-spacing:0.38px;left:963px;top:539px;">On Air...</span>
<span class="t" style="left:1030px;top:539px;">436.64</span>
<span class="t" style="left:1095px;top:539px;">436.64</span>
<span class="t" style="letter-spacing:-0.75px;left:1133px;top:539px;">Alamo</span>
<span class="t" style="letter-spacing:-0.25px;left:1208px;top:539px;">yes</span>
<span class="t" style="letter-spacing:0.17px;left:1233px;top:539px;">auto</span>
<span class="t clip" style="letter-spacing:-0.13px;left:177px;top:554px;">Nissan Versa Or simil...</span>
<span class="t clip" style="left:312px;top:554px;">5</span>
<span class="t clip" style="letter-spacing:-0.19px;left:322px;top:554px;">Car(Compact) - Gold</span>
<span class="t clip" style="letter-spacing:0.14px;left:522px;top:554px;">Flexible Car...</span>
<span class="t clip" style="letter-spacing:-0.75px;left:597px;top:554px;">Sat</span>
<span class="t clip" style="letter-spacing:0.22px;left:632px;top:554px;">28/04/2018</span>
<span class="t clip" style="letter-spacing:0.25px;left:702px;top:554px;">12:00</span>
<span class="t clip" style="letter-spacing:-0.75px;left:742px;top:554px;">Sat</span>
<span class="t clip" style="letter-spacing:0.17px;left:777px;top:554px;">12/05/2018</span>
<span class="t clip" style="letter-spacing:0.25px;left:847px;top:554px;">12:00</span>
<span class="t clip" style="left:896px;top:554px;">14</span>
<span class="t clip" style="letter-spacing:0.38px;left:913px;top:554px;">On Air...</span>
<span class="t clip" style="letter-spacing:0.38px;left:963px;top:554px;">On Air...</span>
<span class="t clip" style="left:1030px;top:554px;">440.93</span>
<span class="t clip" style="left:1095px;top:554px;">440.93</span>
<span class="t clip" style="letter-spacing:-0.75px;left:1133px;top:554px;">Alamo</span>
<span class="t clip" style="letter-spacing:-0.25px;left:1208px;top:554px;">yes</span>
<span class="t clip" style="letter-spacing:0.17px;left:1233px;top:554px;">auto</span>
<span class="t" style="letter-spacing:0.08px;left:178px;top:585px;">First portion: 11.1 sec, total search time: 11.5 sec</span>
<span class="t" style="letter-spacing:-0.5px;left:174px;top:610px;">Summary</span>
<span class="t" style="letter-spacing:-0.2px;left:226px;top:610px;">Search</span>
<span class="t" style="letter-spacing:-0.38px;left:267px;top:610px;">Flt 2A,1C MAN MCO MAN</span>
<span class="t" style="letter-spacing:-0.39px;left:397px;top:610px;">Acc 2A,1C MCO</span>
<span class="t" style="letter-spacing:-0.42px;left:480px;top:610px;color:#fff;">Car MCO</span>
<span class="t" style="letter-spacing:-0.34px;left:531px;top:610px;">Financial Summary</span>
<span class="t" style="left:742px;top:634px;">User: 400</span>
<span class="t" style="letter-spacing:-0.27px;left:799px;top:634px;">Ibrahim Kaya</span>
<span class="t" style="letter-spacing:0.06px;left:873px;top:634px;">Retailer &#x27;Ocean Florida&#x27;</span>
<span class="t" style="letter-spacing:-0.06px;left:999px;top:634px;">Client: none</span>
<span class="t" style="left:1497px;top:634px;">1</span>
</div>
</div>
</body></html>
